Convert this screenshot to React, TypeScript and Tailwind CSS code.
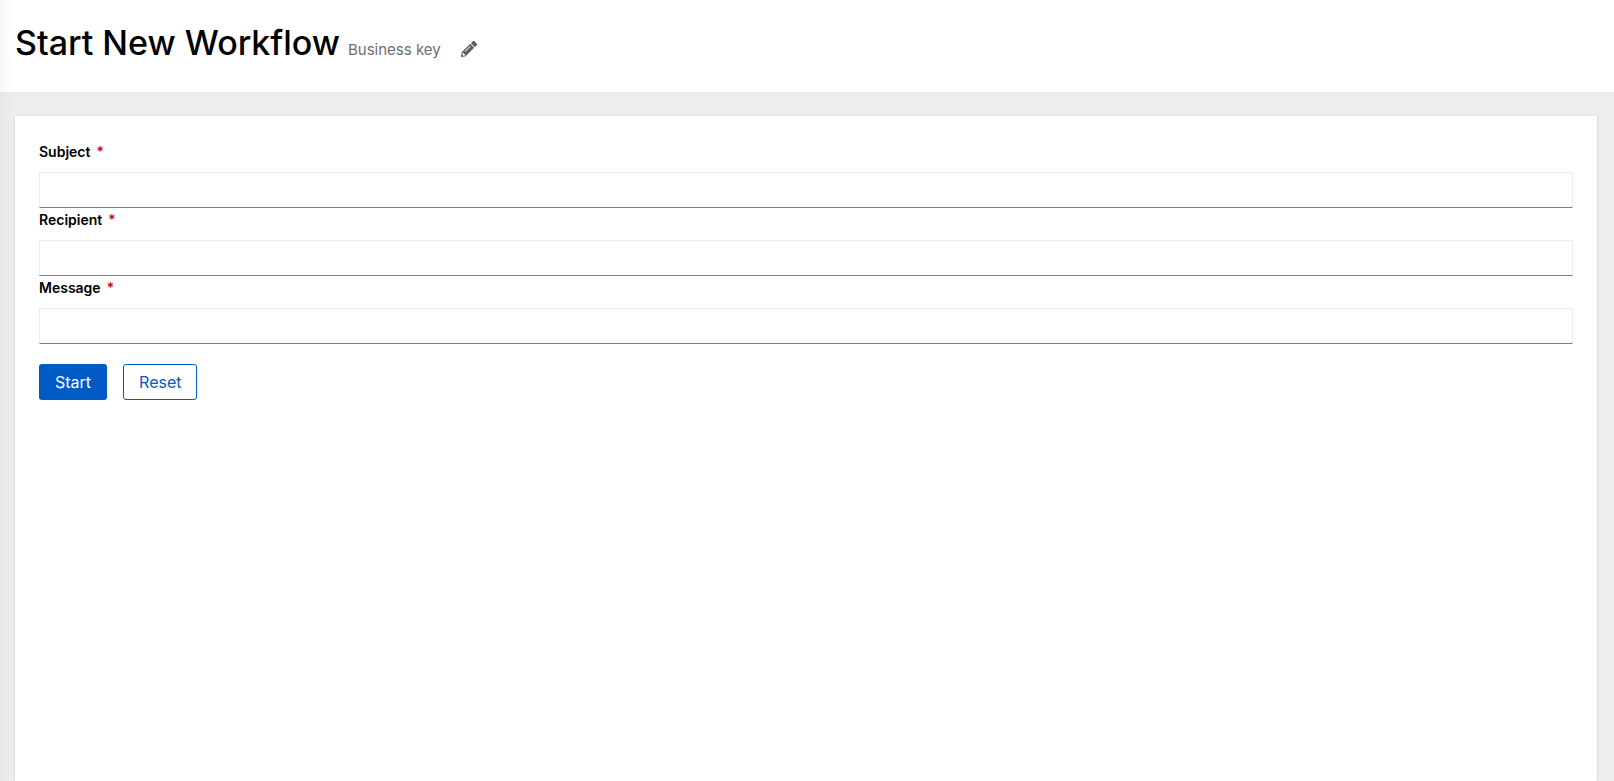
import { useState } from "react";
import type { FormEvent } from "react";
import { FaPencilAlt } from "react-icons/fa";

type FieldName = "subject" | "recipient" | "message";

const FIELDS: { name: FieldName; label: string }[] = [
  { name: "subject", label: "Subject" },
  { name: "recipient", label: "Recipient" },
  { name: "message", label: "Message" },
];

const EMPTY: Record<FieldName, string> = { subject: "", recipient: "", message: "" };

type FieldProps = {
  name: FieldName;
  label: string;
  value: string;
  onChange: (value: string) => void;
};

function TextField({ name, label, value, onChange }: FieldProps) {
  return (
    <div>
      <label htmlFor={name} className="block pb-2 text-sm leading-6 font-semibold text-black">
        {label}
        <span aria-hidden="true" className="ml-1.5 font-medium text-[#d00000]">
          *
        </span>
      </label>
      <input
        id={name}
        name={name}
        type="text"
        required
        value={value}
        onChange={(e) => onChange(e.target.value)}
        className="block h-9 w-full border border-[#ededed] border-b-[#808080] bg-white px-2 text-base outline-none focus:border-b-[#0066cc]"
      />
    </div>
  );
}

function PageHeader() {
  return (
    <header className="bg-white pt-6 pr-4 pb-7 pl-[15px]">
      <div className="flex h-10 items-baseline">
        <h1 className="text-[34px] leading-[38px] font-medium text-black">Start New Workflow</h1>
        <span className="ml-2 text-[15px] text-[#6a6e73]">Business key</span>
        <button type="button" aria-label="Edit business key" className="ml-5 self-end pb-[7px] text-[#5b5f64]">
          <FaPencilAlt className="h-4 w-4" />
        </button>
      </div>
    </header>
  );
}

export default function App() {
  const [values, setValues] = useState(EMPTY);

  const onSubmit = (e: FormEvent) => {
    e.preventDefault();
  };

  return (
    <div className="relative flex min-h-screen flex-col bg-[#ededed] font-['Inter',sans-serif]">
      <div className="pointer-events-none absolute inset-y-0 left-0 w-3 bg-linear-to-r from-black/3 to-transparent" />
      <PageHeader />
      <main className="flex grow flex-col pt-6 pr-[17px] pl-[15px]">
        <div className="grow bg-white p-6 shadow-[0_1px_2px_0_rgba(3,3,3,0.12),0_0_2px_0_rgba(3,3,3,0.06)]">
          <form onSubmit={onSubmit} noValidate>
            {FIELDS.map((f) => (
              <TextField
                key={f.name}
                name={f.name}
                label={f.label}
                value={values[f.name]}
                onChange={(v) => setValues({ ...values, [f.name]: v })}
              />
            ))}
            <div className="mt-5 flex gap-4">
              <button type="submit" className="h-9 rounded-[3px] bg-[#005bc4] px-4 text-base text-white">
                Start
              </button>
              <button
                type="button"
                onClick={() => setValues(EMPTY)}
                className="h-9 rounded-[3px] border border-[#005bc4] px-[15px] text-base text-[#005bc4]"
              >
                Reset
              </button>
            </div>
          </form>
        </div>
      </main>
    </div>
  );
}
